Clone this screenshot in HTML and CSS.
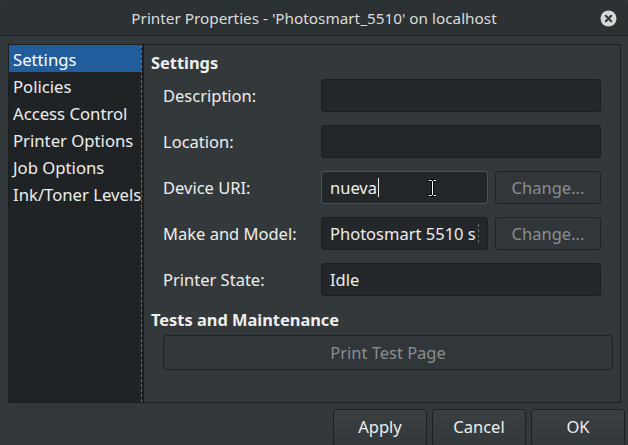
FILE: index.html
```html
<!DOCTYPE html>
<html>
<head>
<meta charset="utf-8">
<link rel="stylesheet" href="styles.css">
</head>
<body>
<div class="window">
  <header class="titlebar">
    <span></span>
    <span class="title">Printer Properties - 'Photosmart_5510' on localhost</span>
    <span class="close">
      <svg width="17" height="17" viewBox="0 0 17 17"><circle cx="8.5" cy="8.5" r="8" fill="#d6d7d7"/><path d="M5.8 5.8 L11.2 11.2 M11.2 5.8 L5.8 11.2" stroke="#2c3133" stroke-width="2" stroke-linecap="round"/></svg>
    </span>
  </header>
  <div class="main">
    <nav class="sidebar">
      <ul class="list">
        <li class="item selected">Settings</li>
        <li class="item">Policies</li>
        <li class="item">Access Control</li>
        <li class="item">Printer Options</li>
        <li class="item">Job Options</li>
        <li class="item">Ink/Toner Levels</li>
      </ul>
    </nav>
    <section class="pane">
      <h2 class="heading">Settings</h2>
      <div class="form">
        <label class="label">Description:</label>
        <div class="entry wide"></div>
        <label class="label">Location:</label>
        <div class="entry wide"></div>
        <label class="label">Device URI:</label>
        <div class="entry focused"><span>nueva</span><span class="caret"></span>
          <svg class="ibeam" width="9" height="18" viewBox="0 0 9 18"><path d="M1 1.5h2.5l1 1 1-1H8M4.5 2.5v13M1 16.5h2.5l1-1 1 1H8" stroke="#000" stroke-width="2.4" fill="none"/><path d="M1 1.5h2.5l1 1 1-1H8M4.5 2.5v13M1 16.5h2.5l1-1 1 1H8" stroke="#fff" stroke-width="1" fill="none"/></svg>
        </div>
        <button class="btn insensitive">Change...</button>
        <label class="label">Make and Model:</label>
        <div class="entry clipped"><span>Photosmart 5510 s</span></div>
        <button class="btn insensitive">Change...</button>
        <label class="label">Printer State:</label>
        <div class="entry wide"><span>Idle</span></div>
      </div>
      <h2 class="heading tests">Tests and Maintenance</h2>
      <button class="btn insensitive testpage">Print Test Page</button>
    </section>
  </div>
  <footer class="actions">
    <button class="btn action">Apply</button>
    <button class="btn action">Cancel</button>
    <button class="btn action">OK</button>
  </footer>
</div>
</body>
</html>
```
FILE: styles.css
```css
* { box-sizing: border-box; }
html, body { margin: 0; padding: 0; }
body {
  width: 628px;
  height: 445px;
  overflow: hidden;
  background: #33393b;
  font-family: "Noto Sans", "DejaVu Sans", sans-serif;
  font-size: 16.5px;
  color: #eeeeec;
}
.window { width: 628px; height: 445px; display: flex; flex-direction: column; }
.titlebar {
  height: 36px;
  flex: none;
  display: grid;
  grid-template-columns: 1fr auto 1fr;
  align-items: center;
  background: #2c3133;
  border-bottom: 1px solid #1c1f20;
  border-radius: 6px 6px 0 0;
}
.title { color: #dcdcdb; font-size: 15.3px; padding-top: 1px; white-space: nowrap; }
.close { justify-self: end; margin-right: 11px; display: flex; margin-top: 1px; }

.main { display: flex; padding: 8px 8px 0 8px; height: 367px; flex: none; }
.sidebar {
  width: 136px;
  flex: none;
  background: #202326;
  border: 1px solid #1b1e1f;
  border-right-width: 2px;
  overflow: hidden;
}
.list {
  list-style: none;
  margin: 0;
  padding: 0;
  height: 100%;
  border-right: 1px dashed #6a6e70;
}
.item {
  height: 27px;
  line-height: 27px;
  padding: 1px 0 0 4px;
  white-space: nowrap;
  font-size: 16.7px;
}
.item.selected { background: #215d9c; color: #ffffff; }

.pane {
  flex: 1;
  border: 1px solid #1b1e1f;
  border-left: none;
  padding: 8px 7px 0 7px;
  display: flex;
  flex-direction: column;
}
.heading { margin: 0; font-size: 16.4px; font-weight: bold; height: 19px; line-height: 19px; }
.form {
  display: grid;
  grid-template-columns: 151px 167px 106px;
  column-gap: 7px;
  row-gap: 13px;
  padding-left: 12px;
  margin-top: 7px;
  align-items: center;
}
.label { font-size: 16.5px; }
.entry {
  height: 33px;
  background: #232729;
  border: 1px solid #1b1f20;
  border-radius: 3px;
  display: flex;
  align-items: center;
  padding-left: 8px;
  font-size: 16.5px;
  position: relative;
  white-space: nowrap;
  overflow: hidden;
}
.entry.wide { grid-column: 2 / 4; }
.entry.focused { border-color: #215d9c; }
.caret { display: inline-block; width: 1px; height: 19px; background: #eeeeec; margin-left: 1px; }
.ibeam { position: absolute; left: 106px; top: 7px; }
.entry.clipped::after {
  content: "";
  position: absolute;
  right: 8px;
  top: 6px;
  bottom: 6px;
  border-right: 1px dashed #6a6e70;
}
.btn {
  font-family: inherit;
  font-size: 16.5px;
  color: #eeeeec;
  background: linear-gradient(#3a4042, #33393b);
  border: 1px solid #1b1f20;
  border-radius: 3px;
  height: 33px;
  padding: 0;
}
.btn.insensitive { color: #8b8e8f; background: #30363a; border-color: #1f2325; }
.heading.tests { margin-top: 14px; }
.testpage { margin: 6px 0 0 12px; height: 35px; width: 450px; }

.actions {
  flex: none;
  display: flex;
  justify-content: flex-end;
  gap: 5px;
  padding: 6px 3px 0 0;
}
.btn.action { width: 94px; height: 38px; padding-bottom: 3px; }
```
